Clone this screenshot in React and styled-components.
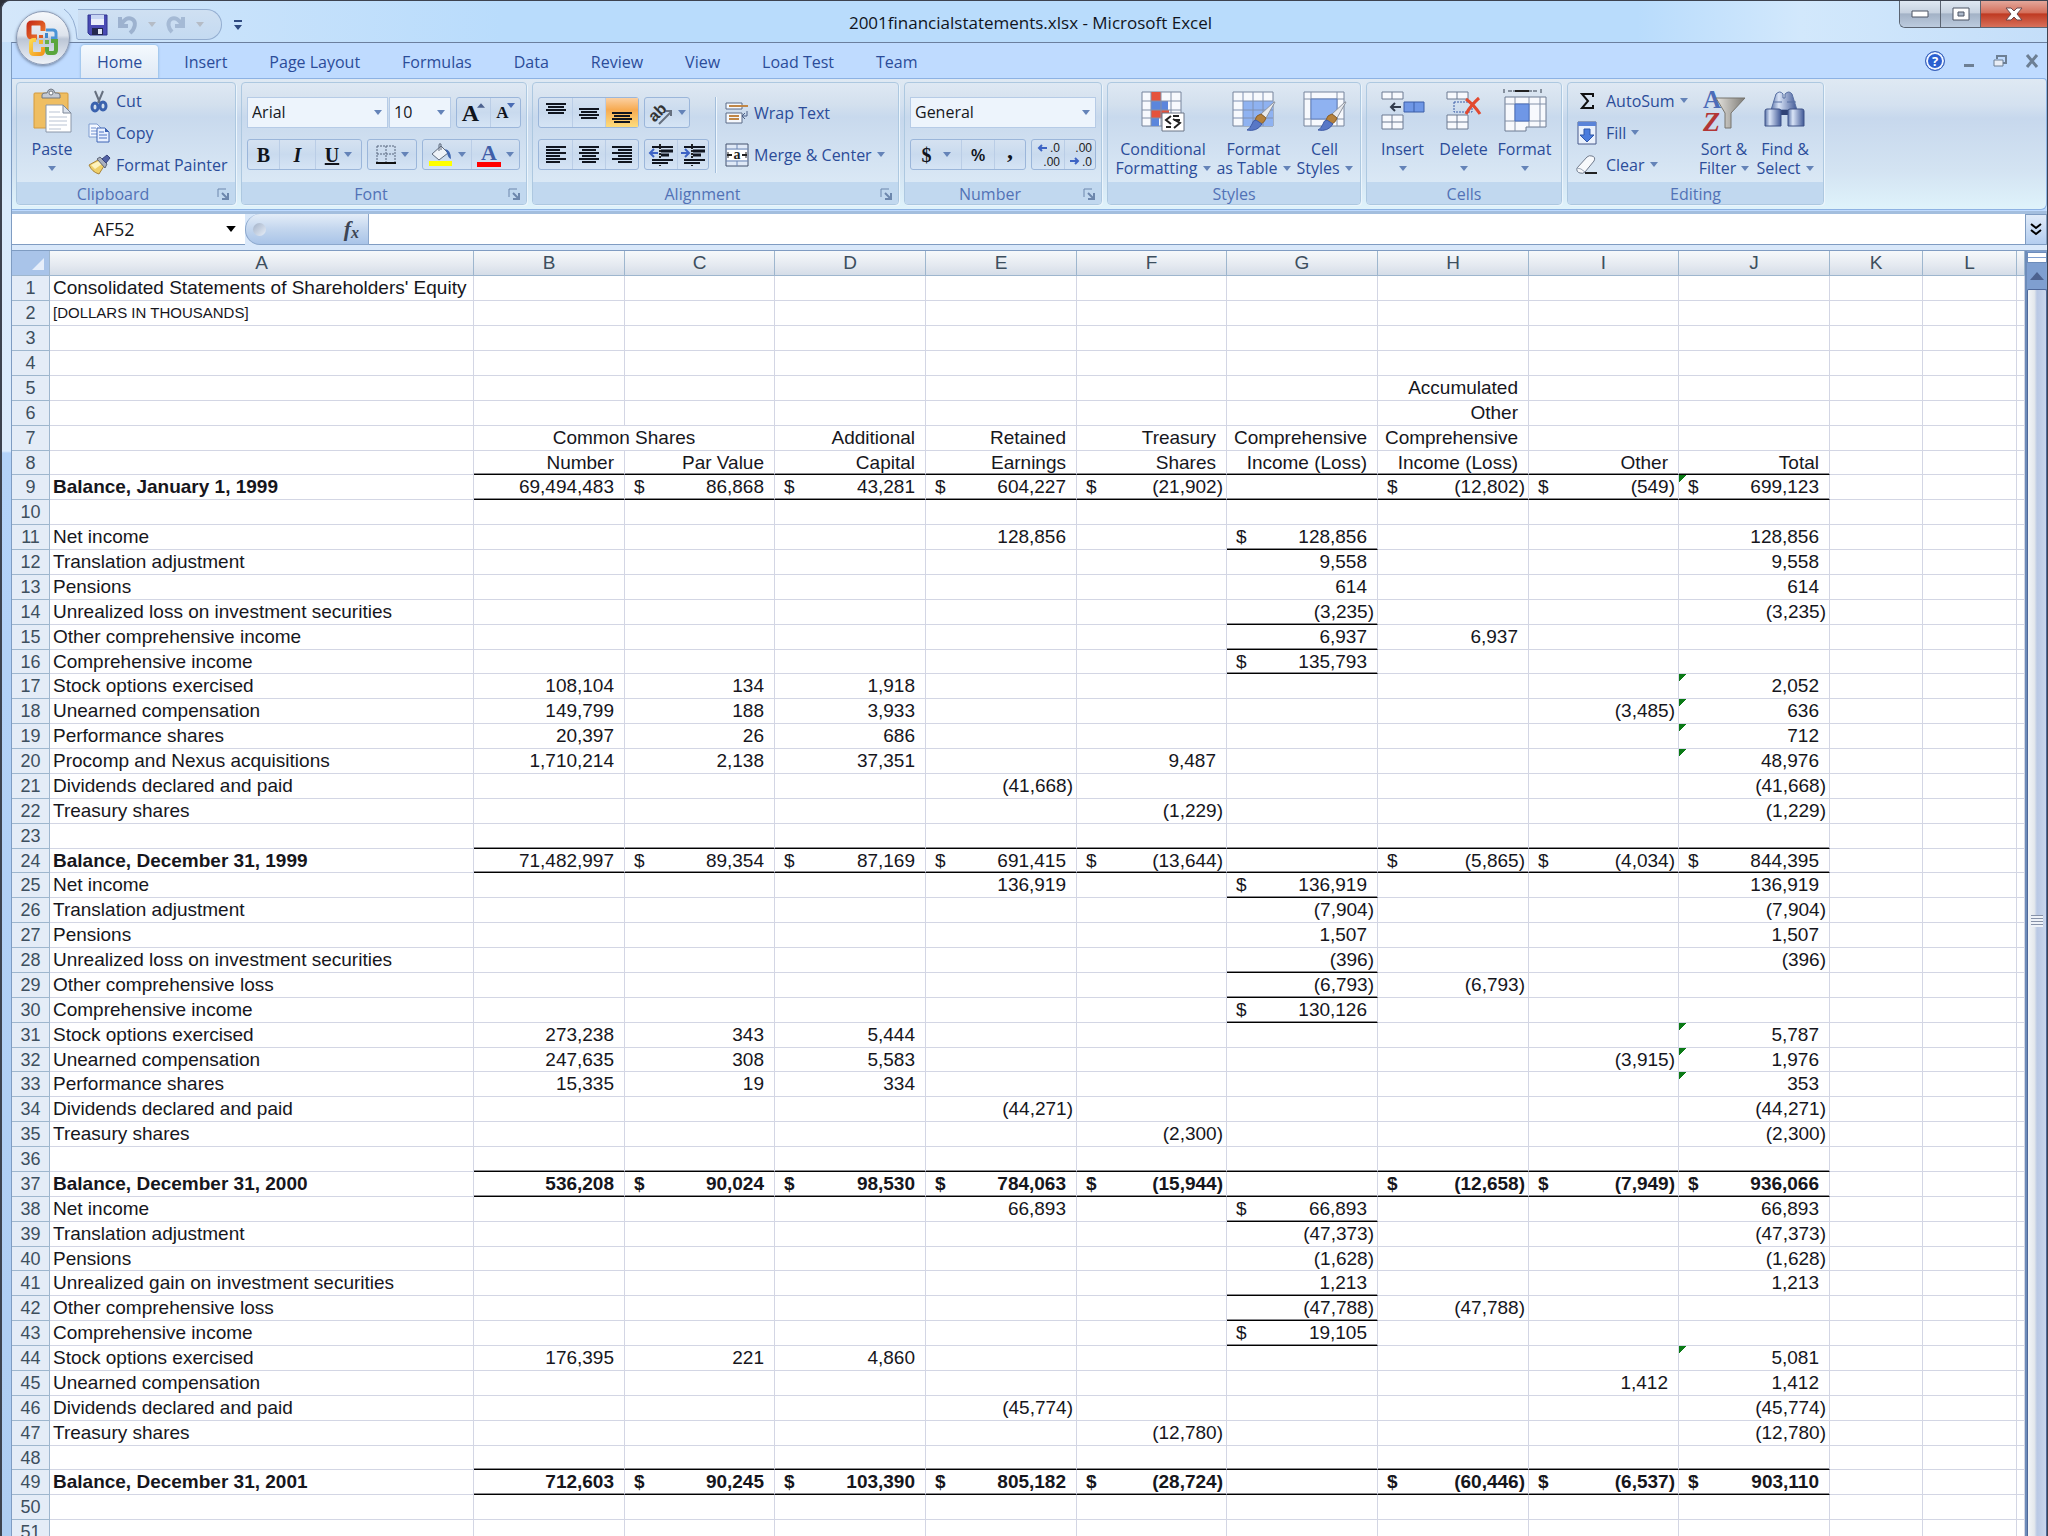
import React, { useState } from 'react';
import styled, { createGlobalStyle, css } from 'styled-components';

const COLUMNS = [
    { id: 'A', width: 424 },
    { id: 'B', width: 151 },
    { id: 'C', width: 150 },
    { id: 'D', width: 151 },
    { id: 'E', width: 151 },
    { id: 'F', width: 150 },
    { id: 'G', width: 151 },
    { id: 'H', width: 151 },
    { id: 'I', width: 150 },
    { id: 'J', width: 151 },
    { id: 'K', width: 93 },
    { id: 'L', width: 94 },
];

// a leading $ is drawn at the left of the cell, like Excel's accounting format
const SHEET = {
    1: { A: "Consolidated Statements of Shareholders' Equity" },
    2: { A: '[DOLLARS IN THOUSANDS]' },
    5: { H: 'Accumulated' },
    6: { H: 'Other' },
    7: { B: 'Common Shares', D: 'Additional', E: 'Retained', F: 'Treasury', G: 'Comprehensive', H: 'Comprehensive' },
    8: { B: 'Number', C: 'Par Value', D: 'Capital', E: 'Earnings', F: 'Shares', G: 'Income (Loss)', H: 'Income (Loss)', I: 'Other', J: 'Total' },
    9: { A: 'Balance, January 1, 1999', B: '69,494,483', C: '$86,868', D: '$43,281', E: '$604,227', F: '$(21,902)', H: '$(12,802)', I: '$(549)', J: '$699,123' },
    11: { A: 'Net income', E: '128,856', G: '$128,856', J: '128,856' },
    12: { A: 'Translation adjustment', G: '9,558', J: '9,558' },
    13: { A: 'Pensions', G: '614', J: '614' },
    14: { A: 'Unrealized loss on investment securities', G: '(3,235)', J: '(3,235)' },
    15: { A: 'Other comprehensive income', G: '6,937', H: '6,937' },
    16: { A: 'Comprehensive income', G: '$135,793' },
    17: { A: 'Stock options exercised', B: '108,104', C: '134', D: '1,918', J: '2,052' },
    18: { A: 'Unearned compensation', B: '149,799', C: '188', D: '3,933', I: '(3,485)', J: '636' },
    19: { A: 'Performance shares', B: '20,397', C: '26', D: '686', J: '712' },
    20: { A: 'Procomp and Nexus acquisitions', B: '1,710,214', C: '2,138', D: '37,351', F: '9,487', J: '48,976' },
    21: { A: 'Dividends declared and paid', E: '(41,668)', J: '(41,668)' },
    22: { A: 'Treasury shares', F: '(1,229)', J: '(1,229)' },
    24: { A: 'Balance, December 31, 1999', B: '71,482,997', C: '$89,354', D: '$87,169', E: '$691,415', F: '$(13,644)', H: '$(5,865)', I: '$(4,034)', J: '$844,395' },
    25: { A: 'Net income', E: '136,919', G: '$136,919', J: '136,919' },
    26: { A: 'Translation adjustment', G: '(7,904)', J: '(7,904)' },
    27: { A: 'Pensions', G: '1,507', J: '1,507' },
    28: { A: 'Unrealized loss on investment securities', G: '(396)', J: '(396)' },
    29: { A: 'Other comprehensive loss', G: '(6,793)', H: '(6,793)' },
    30: { A: 'Comprehensive income', G: '$130,126' },
    31: { A: 'Stock options exercised', B: '273,238', C: '343', D: '5,444', J: '5,787' },
    32: { A: 'Unearned compensation', B: '247,635', C: '308', D: '5,583', I: '(3,915)', J: '1,976' },
    33: { A: 'Performance shares', B: '15,335', C: '19', D: '334', J: '353' },
    34: { A: 'Dividends declared and paid', E: '(44,271)', J: '(44,271)' },
    35: { A: 'Treasury shares', F: '(2,300)', J: '(2,300)' },
    37: { A: 'Balance, December 31, 2000', B: '536,208', C: '$90,024', D: '$98,530', E: '$784,063', F: '$(15,944)', H: '$(12,658)', I: '$(7,949)', J: '$936,066' },
    38: { A: 'Net income', E: '66,893', G: '$66,893', J: '66,893' },
    39: { A: 'Translation adjustment', G: '(47,373)', J: '(47,373)' },
    40: { A: 'Pensions', G: '(1,628)', J: '(1,628)' },
    41: { A: 'Unrealized gain on investment securities', G: '1,213', J: '1,213' },
    42: { A: 'Other comprehensive loss', G: '(47,788)', H: '(47,788)' },
    43: { A: 'Comprehensive income', G: '$19,105' },
    44: { A: 'Stock options exercised', B: '176,395', C: '221', D: '4,860', J: '5,081' },
    45: { A: 'Unearned compensation', I: '1,412', J: '1,412' },
    46: { A: 'Dividends declared and paid', E: '(45,774)', J: '(45,774)' },
    47: { A: 'Treasury shares', F: '(12,780)', J: '(12,780)' },
    49: { A: 'Balance, December 31, 2001', B: '712,603', C: '$90,245', D: '$103,390', E: '$805,182', F: '$(28,724)', H: '$(60,446)', I: '$(6,537)', J: '$903,110' },
};

const ROW_COUNT = 51;
const BOLD_LABELS = [9, 24, 37, 49];
const BOLD_ROWS = [37, 49];
const RULED_ROWS = [8, 9, 23, 24, 36, 37, 48, 49];
const RULED_G = [11, 14, 15, 16, 25, 28, 29, 30, 38, 41, 42, 43];
const FLAGGED = [9, 17, 18, 19, 20, 31, 32, 33, 44];

const TABS = ['Home', 'Insert', 'Page Layout', 'Formulas', 'Data', 'Review', 'View', 'Load Test', 'Team'];

/* ---------- icons ---------- */

const Caret = ({ color = '#6483b8', size = 8 }) => (
    <svg width={size} height={size / 2 + 1} viewBox="0 0 8 5" aria-hidden="true">
        <path d="M0 0h8L4 5z" fill={color} />
    </svg>
);

const Caretup = () => (
    <svg width="14" height="8" viewBox="0 0 14 8" aria-hidden="true">
        <path d="M0 8l7-8 7 8z" fill="#4d628f" />
    </svg>
);

const OfficeLogo = () => (
    <svg width="34" height="36" viewBox="0 0 34 36" fill="none" aria-hidden="true">
        <defs>
            <linearGradient id="oRed" x1="0" y1="0" x2="1" y2="1">
                <stop offset="0" stopColor="#c8321a" />
                <stop offset="1" stopColor="#ef7a2c" />
            </linearGradient>
            <linearGradient id="oYellow" x1="0" y1="0" x2="1" y2="1">
                <stop offset="0" stopColor="#fbd84f" />
                <stop offset="1" stopColor="#f2961d" />
            </linearGradient>
        </defs>
        <path d="M11 17H6q-3 0-3-3V6q0-3 3-3h8q3 0 3 3v5" stroke="url(#oRed)" strokeWidth="5" />
        <path d="M20 10h7q3 0 3 3v5h-5" stroke="#4a94d6" strokeWidth="3" />
        <path d="M10 20H8q-3 0-3 3v8q0 3 3 3h6q3 0 3-3v-4" stroke="url(#oYellow)" strokeWidth="4" />
        <path d="M25 21h5v9q0 3-3 3h-4q-2 0-2-3v-3" stroke="#5aa63c" strokeWidth="4" />
        <path d="M13 15h4v3h-4z" fill="#dc5a22" />
        <path d="M19 13h3v5h-3z" fill="#3f86cc" />
        <path d="M13 20h4v4h-4z" fill="#f3b62c" />
        <path d="M19 20h4v4h-4z" fill="#6cb048" />
    </svg>
);

const SaveIcon = () => (
    <svg width="21" height="22" viewBox="0 0 21 22" aria-hidden="true">
        <path d="M1 1h19v20H3l-2-2z" fill="#4a4bb4" stroke="#2f3490" />
        <path d="M4 1h13v10H4z" fill="#e9eefb" />
        <path d="M4 1h13v4H4z" fill="#c9d6f4" />
        <path d="M5 14h11v7H5z" fill="#23284e" />
        <path d="M11 15h4v5h-4z" fill="#dfe5f5" />
    </svg>
);

const UndoIcon = () => (
    <svg width="20" height="20" viewBox="0 0 20 20" fill="none" aria-hidden="true">
        <path d="M2 2v9h8" stroke="#9db2cf" strokeWidth="4" />
        <path d="M3 10C6 4 10 2 14 4c5 3 3 10-2 14" stroke="#9db2cf" strokeWidth="4" />
    </svg>
);

const RedoIcon = () => (
    <svg width="20" height="20" viewBox="0 0 20 20" fill="none" aria-hidden="true">
        <path d="M17 2v9H9" stroke="#a5bad5" strokeWidth="4" />
        <path d="M16 10C13 4 9 2 5 4 1 7 2 13 6 17" stroke="#a5bad5" strokeWidth="4" />
    </svg>
);

const PasteIcon = () => (
    <svg width="40" height="44" viewBox="0 0 40 44" aria-hidden="true">
        <path d="M3 4h32q1 0 1 1v34H2V5q0-1 1-1z" fill="#efbe62" stroke="#d49a3c" />
        <path d="M10 9V6q0-2 3-2h2q1-4 4-4t4 4h2q3 0 3 2v3z" fill="#c5cad3" stroke="#6f7680" />
        <circle cx="19" cy="4" r="2" fill="#fff" stroke="#6f7680" />
        <path d="M14 16h17l8 8v19H14z" fill="#fff" stroke="#8a96a8" />
        <path d="M31 16v8h8z" fill="#dbe2ec" stroke="#7d8798" />
        <path d="M17 23h11M17 28h18M17 32h18M17 36h18M17 40h12" stroke="#b9c3d3" />
    </svg>
);

const CutIcon = () => (
    <svg width="18" height="22" viewBox="0 0 18 22" fill="none" aria-hidden="true">
        <path d="M5 1l5 12M13 1L8 13" stroke="#66707f" strokeWidth="2" />
        <ellipse cx="5" cy="17" rx="3" ry="4" stroke="#3a62ae" strokeWidth="3" />
        <ellipse cx="13" cy="16" rx="3" ry="4" stroke="#3a62ae" strokeWidth="3" />
    </svg>
);

const CopyIcon = () => (
    <svg width="22" height="20" viewBox="0 0 22 20" aria-hidden="true">
        <path d="M1 1h8l4 4v9H1z" fill="#f4f8ff" stroke="#7f9cd0" />
        <path d="M3 5h5M3 8h8M3 11h8" stroke="#6f8fd0" />
        <path d="M9 5h8l4 4v10H9z" fill="#e8f0ff" stroke="#3f64b4" />
        <path d="M11 9h5M11 12h8M11 15h8" stroke="#4d72c4" />
        <path d="M17 5v4h4z" fill="#3f64b4" />
    </svg>
);

const PainterIcon = () => (
    <svg width="23" height="21" viewBox="0 0 23 21" aria-hidden="true">
        <path d="M1 11l9-5 6 6-5 8Q4 18 1 11z" fill="#efd06a" stroke="#a8843a" />
        <path d="M3 11l8-4 3 3-7 5z" fill="#fdf3bf" />
        <path d="M9 5l3-2 7 7-2 4z" fill="#a9b0be" stroke="#5d6677" />
        <path d="M14 5l5-4 3 3-4 5z" fill="#5162a6" stroke="#38447c" />
    </svg>
);

const BordersIcon = () => (
    <svg width="20" height="20" viewBox="0 0 20 20" fill="none" aria-hidden="true">
        <path d="M1 1h18M1 9h18M1 1v16M10 1v16M19 1v16" stroke="#56647c" strokeDasharray="2 1" />
        <path d="M0 18h20" stroke="#111" strokeWidth="2" />
    </svg>
);

const FillColorIcon = () => (
    <svg width="24" height="24" viewBox="0 0 24 24" aria-hidden="true">
        <path d="M3 11l9-8 7 7-9 7z" fill="#eef2f8" stroke="#5e6a7c" />
        <path d="M10 8V2q0-2 2-1v6" fill="none" stroke="#5e6a7c" />
        <path d="M16 6q6 1 6 10-3-1-4-6z" fill="#3f66b0" />
        <path d="M0 18h23v5H0z" fill="#ffff00" />
    </svg>
);

const FontColorIcon = () => (
    <ColorLetter>
        A
        <ColorBar />
    </ColorLetter>
);

// one bar per text line, 3px apart from the given start
const LinesIcon = ({ lines, start, align = 'center' }) => (
    <svg width="20" height="22" viewBox="0 0 20 22" aria-hidden="true">
        {lines.map((w, i) => {
            const x = align === 'left' ? 0 : align === 'right' ? 20 - w : (20 - w) / 2;
            return <rect key={i} x={x} y={start + i * 3} width={w} height="2" fill="#10151f" />;
        })}
    </svg>
);

const IndentIcon = ({ flip }) => (
    <svg width="24" height="22" viewBox="0 0 24 22" fill="none" aria-hidden="true">
        <path d="M11 0v22" stroke="#222" strokeWidth="2" strokeDasharray="2 1" />
        <path d="M3 3h21M3 16h21M3 19h16" stroke="#10151f" strokeWidth="2" />
        <path d="M12 7h12M12 11h8" stroke="#10151f" strokeWidth="3" />
        {flip
            ? <path d="M0 9h7M4 5l4 4-4 4" stroke="#3d63c4" strokeWidth="2" />
            : <path d="M9 9H2M5 5L1 9l4 4" stroke="#3d63c4" strokeWidth="2" />}
    </svg>
);

const OrientationIcon = () => (
    <svg width="24" height="24" viewBox="0 0 24 24" aria-hidden="true">
        <text x="1" y="17" fontFamily="Liberation Sans, sans-serif" fontSize="16" fontWeight="700" fill="#333" transform="rotate(-45 9 14)">ab</text>
        <path d="M10 23L22 11M17 10h5v5" fill="none" stroke="#66707f" strokeWidth="2" />
    </svg>
);

const WrapIcon = () => (
    <svg width="24" height="24" viewBox="0 0 24 24" aria-hidden="true">
        <path d="M1 2h16v6H1zM1 12h16v10H1z" fill="#f5f8fd" stroke="#5a6a86" />
        <path d="M4 5h19M4 15h10M4 18h10" stroke="#c08646" strokeWidth="2" />
        <path d="M22 10v5h-4M20 12l-3 3 3 3" fill="none" stroke="#4b5f86" />
    </svg>
);

const MergeIcon = () => (
    <svg width="24" height="24" viewBox="0 0 24 24" aria-hidden="true">
        <path d="M1 1h22v22H1z" fill="#dfe9f7" stroke="#44536e" />
        <path d="M1 6h22M1 18h22M12 1v5M12 18v5" stroke="#6d86b4" />
        <path d="M2 7h20v10H2z" fill="#fff" />
        <path d="M2 12h5M17 12h5" stroke="#222" strokeWidth="2" />
        <path d="M3 9v6M21 9v6" stroke="#222" />
        <text x="12" y="16" textAnchor="middle" fontFamily="Liberation Serif, serif" fontSize="14" fontWeight="700" fill="#222">a</text>
    </svg>
);

const DecimalIcon = ({ increase }) => (
    <svg width="24" height="24" viewBox="0 0 24 24" aria-hidden="true">
        <text x="24" y="9" textAnchor="end" fontFamily="Liberation Sans, sans-serif" fontSize="12" fill="#222">{increase ? '.0' : '.00'}</text>
        <text x="24" y="23" textAnchor="end" fontFamily="Liberation Sans, sans-serif" fontSize="12" fill="#222">{increase ? '.00' : '.0'}</text>
        {increase
            ? <path d="M11 5H3M6 2L3 5l3 3" fill="none" stroke="#3d63c4" strokeWidth="2" />
            : <path d="M2 18h8M7 15l3 3-3 3" fill="none" stroke="#3d63c4" strokeWidth="2" />}
    </svg>
);

const ConditionalIcon = () => (
    <svg width="44" height="44" viewBox="0 0 44 44" aria-hidden="true">
        <path d="M1 3h39v34H1z" fill="#f7f9fd" stroke="#76849c" />
        <path d="M10 3h10v9H10zM10 21h18v8H10z" fill="#e5533c" />
        <path d="M10 12h17v9H10zM10 29h8v8h-8z" fill="#5b86dc" />
        <path d="M1 12h39M1 21h39M1 29h39M10 3v34M20 3v34M30 3v34" stroke="#8290a8" fill="none" />
        <path d="M21 24h22v18H21z" fill="#fff" stroke="#6a7486" />
        <path d="M30 27l-5 4 5 4M25 38h5M32 27h6M33 31h6M32 30l7 4-6 5" stroke="#222" strokeWidth="2" fill="none" />
    </svg>
);

const Brush = () => (
    <g>
        <path d="M43 13l-9 16-5-4 13-12z" fill="#e8e9ec" stroke="#8b929e" />
        <path d="M34 29l-5-4q-5 1-6 6l6 4q4-2 5-6z" fill="#b5813d" stroke="#8a5f28" />
        <path d="M24 31q-3 0-4 4-2 5-5 6 10 2 15-6z" fill="#5877c6" stroke="#3f5ba6" />
    </g>
);

const TableStyleIcon = () => (
    <svg width="44" height="44" viewBox="0 0 44 44" aria-hidden="true">
        <path d="M1 3h40v34H1z" fill="#f7f9fd" stroke="#76849c" />
        <path d="M11 12h30v25H11z" fill="#8fb2f1" />
        <path d="M1 12h40M1 21h40M1 29h40M11 3v34M21 3v34M31 3v34" stroke="#7f90b2" fill="none" />
        <Brush />
    </svg>
);

const CellStyleIcon = () => (
    <svg width="44" height="44" viewBox="0 0 44 44" aria-hidden="true">
        <path d="M1 3h40v34H1z" fill="#f7f9fd" stroke="#76849c" />
        <path d="M1 10h40M1 30h40M8 3v34M34 3v34" stroke="#8290a8" />
        <path d="M8 10h26v20H8z" fill="#8fb2f1" stroke="#6280bd" />
        <Brush />
    </svg>
);

const InsertIcon = () => (
    <svg width="44" height="44" viewBox="0 0 44 44" aria-hidden="true">
        <path d="M1 3h21v7H1zM1 26h21v14H1zM11 3v7M11 26v14M1 33h21" fill="#f7f9fd" stroke="#6c7a92" />
        <path d="M23 13h20v10H23zM33 13v10" fill="#6f97e6" stroke="#3d5fa8" />
        <path d="M20 18h-9M14 14l-4 4 4 4" fill="none" stroke="#333c4c" strokeWidth="2" />
    </svg>
);

const DeleteIcon = () => (
    <svg width="44" height="44" viewBox="0 0 44 44" aria-hidden="true">
        <path d="M5 3h21v7H5zM5 26h21v14H5zM15 3v7M15 26v14M5 33h21" fill="#f7f9fd" stroke="#6c7a92" />
        <path d="M12 13h18v10H12z" fill="none" stroke="#3d5fa8" strokeDasharray="2 1" />
        <path d="M24 10q8 6 14 15M37 9Q29 16 24 25" fill="none" stroke="#e2492f" strokeWidth="3" />
    </svg>
);

const FormatIcon = () => (
    <svg width="44" height="44" viewBox="0 0 44 44" aria-hidden="true">
        <path d="M1 0v5M38 0v5M5 2h30" stroke="#333c4c" strokeDasharray="4 1" />
        <path d="M12 2h14" stroke="#222" strokeWidth="2" />
        <path d="M2 8h41v30H23v4H2z" fill="#f7f9fd" stroke="#6c7a92" />
        <path d="M2 15h41M2 32h41M12 8v34M26 8v30M37 8v30" stroke="#8290a8" />
        <path d="M12 15h14v17H12z" fill="#6f97e6" stroke="#4d71bd" />
    </svg>
);

const SigmaIcon = () => (
    <svg width="16" height="18" viewBox="0 0 16 18" fill="none" aria-hidden="true">
        <path d="M14 5V2H3l6 7-6 7h11v-3" stroke="#111" strokeWidth="2" />
    </svg>
);

const FillIcon = () => (
    <svg width="20" height="24" viewBox="0 0 20 24" aria-hidden="true">
        <path d="M1 1h18v22H1z" fill="#eaf1fc" stroke="#46598a" />
        <path d="M1 1h18v4H1z" fill="#5b84d8" />
        <path d="M7 8h6v6h4l-7 7-7-7h4z" fill="#4b7cdd" stroke="#2f56a8" />
    </svg>
);

const ClearIcon = () => (
    <svg width="22" height="20" viewBox="0 0 22 20" aria-hidden="true">
        <path d="M1 13L11 2q2-2 5-1 4 1 2 5l-9 11q-2 2-5 1-4-1-3-5z" fill="#f7f9fc" stroke="#707a8c" />
        <path d="M1 13q4 0 8 4" fill="none" stroke="#9aa5b6" />
        <path d="M9 18h12" stroke="#222" strokeWidth="2" />
    </svg>
);

const SortIcon = () => (
    <svg width="44" height="44" viewBox="0 0 44 44" aria-hidden="true">
        <defs>
            <linearGradient id="funnel" x1="0" x2="1">
                <stop offset="0" stopColor="#e6e4df" />
                <stop offset="1" stopColor="#7d7b76" />
            </linearGradient>
        </defs>
        <text x="1" y="19" fontFamily="Liberation Serif, serif" fontSize="25" fontWeight="700" fill="#4c6cb8">A</text>
        <text x="1" y="42" fontFamily="Liberation Serif, serif" fontSize="28" fontWeight="700" fontStyle="italic" fill="#b23636">Z</text>
        <path d="M14 9h29L29 24v15h-6V24z" fill="url(#funnel)" stroke="#77756f" />
    </svg>
);

const FindIcon = () => (
    <svg width="42" height="44" viewBox="0 0 42 44" aria-hidden="true">
        <defs>
            <linearGradient id="barrel" x1="0" x2="1">
                <stop offset="0" stopColor="#5a73a8" />
                <stop offset="0.3" stopColor="#d9e4f7" />
                <stop offset="1" stopColor="#405896" />
            </linearGradient>
        </defs>
        <path d="M12 5q4-4 7 0v4h2V5q4-4 7 0l5 16H7z" fill="url(#barrel)" stroke="#5870a3" />
        <path d="M17 21h7v5h-7z" fill="#2f4275" />
        <path d="M1 22q0-2 2-2h12q2 0 2 2v15H1z" fill="url(#barrel)" stroke="#3e5387" />
        <path d="M24 22q0-2 2-2h12q2 0 2 2v15H24z" fill="url(#barrel)" stroke="#3e5387" />
        <path d="M9 13h9M23 13h9" stroke="#5870a3" />
    </svg>
);

const LauncherIcon = () => (
    <svg width="12" height="12" viewBox="0 0 12 12" fill="none" aria-hidden="true">
        <path d="M1 9V1h8" stroke="#6d87ad" />
        <path d="M5 5l5 5M11 5v6H5" stroke="#6d87ad" strokeWidth="2" />
    </svg>
);

/* ---------- sheet ---------- */

function SheetCell({ row, col }) {
    const raw = (SHEET[row] && SHEET[row][col]) || '';
    const accounting = raw.startsWith('$');
    const text = accounting ? raw.slice(1) : raw;
    const ruled = (RULED_ROWS.includes(row) && col >= 'B' && col <= 'J') || (col === 'G' && RULED_G.includes(row));

    return (
        <Cell
            colSpan={row === 7 && col === 'B' ? 2 : 1}
            $label={col === 'A'}
            $small={row === 2}
            $center={row === 7 && col === 'B'}
            $negative={text.startsWith('(')}
            $bold={BOLD_ROWS.includes(row) || (col === 'A' && BOLD_LABELS.includes(row))}
            $ruled={ruled}
            $flagged={col === 'J' && FLAGGED.includes(row)}
        >
            {accounting ? (
                <Accounting>
                    <span>$</span>
                    <span>{text}</span>
                </Accounting>
            ) : text}
        </Cell>
    );
}

function Sheet() {
    const rows = Array.from({ length: ROW_COUNT }, (_, i) => i + 1);

    return (
        <SheetArea>
            <GridPane>
                <Table>
                    <colgroup>
                        <Col $width={38} />
                        {COLUMNS.map((c) => <Col key={c.id} $width={c.width} />)}
                        <col />
                    </colgroup>
                    <thead>
                        <tr>
                            <Corner aria-label="Select all">
                                <svg width="12" height="12" viewBox="0 0 12 12" aria-hidden="true">
                                    <path d="M12 0v12H0z" fill="#e6eefa" />
                                </svg>
                            </Corner>
                            {COLUMNS.map((c) => <ColumnHead key={c.id} scope="col">{c.id}</ColumnHead>)}
                            <ColumnHead aria-label="M" />
                        </tr>
                    </thead>
                    <tbody>
                        {rows.map((row) => (
                            <Row key={row}>
                                <RowHead scope="row">{row}</RowHead>
                                {COLUMNS.filter((c) => !(row === 7 && c.id === 'C')).map((c) => (
                                    <SheetCell key={c.id} row={row} col={c.id} />
                                ))}
                                <Cell />
                            </Row>
                        ))}
                    </tbody>
                </Table>
            </GridPane>
            <ScrollBar>
                <SplitBox />
                <ScrollUp aria-label="Scroll up"><Caretup /></ScrollUp>
                <Thumb><Grip /></Thumb>
            </ScrollBar>
        </SheetArea>
    );
}

/* ---------- ribbon ---------- */

function Group({ title, width, launcher, children }) {
    return (
        <GroupBox $width={width}>
            {children}
            <GroupTitle $launcher={launcher}>
                <span>{title}</span>
                {launcher && <Launcher aria-label={`${title} settings`}><LauncherIcon /></Launcher>}
            </GroupTitle>
        </GroupBox>
    );
}

function BigItem({ icon, width, first, second }) {
    return (
        <BigButton $width={width}>
            {icon}
            <BigText>{first}</BigText>
            <BigText>{second}<Caret /></BigText>
        </BigButton>
    );
}

function Combo({ label, value, width }) {
    return (
        <ComboBox $width={width}>
            <ComboSelect aria-label={label} defaultValue={value}>
                <option>{value}</option>
            </ComboSelect>
            <ComboArrow><Caret /></ComboArrow>
        </ComboBox>
    );
}

function Ribbon() {
    return (
        <RibbonPanel>
            <Group title="Clipboard" width={220} launcher>
                <Tools>
                    <BigItem icon={<PasteIcon />} width={60} first="Paste" />
                    <Stack>
                        <SmallButton><IconSlot><CutIcon /></IconSlot>Cut</SmallButton>
                        <SmallButton><IconSlot><CopyIcon /></IconSlot>Copy</SmallButton>
                        <SmallButton><IconSlot><PainterIcon /></IconSlot>Format Painter</SmallButton>
                    </Stack>
                </Tools>
            </Group>

            <Group title="Font" width={286} launcher>
                <Rows>
                    <ToolRow>
                        <Joined>
                            <Combo label="Font" value="Arial" width={141} />
                            <Combo label="Font size" value="10" width={62} />
                        </Joined>
                        <Segment>
                            <SegButton $width={33} aria-label="Grow font"><Glyph $size={24}>A</Glyph><Raised><Caretup /></Raised></SegButton>
                            <SegButton $width={30} aria-label="Shrink font"><Glyph $size={17}>A</Glyph><Raised><Caret color="#4a6cb4" /></Raised></SegButton>
                        </Segment>
                    </ToolRow>
                    <ToolRow>
                        <Segment>
                            <SegButton $width={31}><Glyph $size={20}>B</Glyph></SegButton>
                            <SegButton $width={36}><Glyph $size={20} $italic>I</Glyph></SegButton>
                            <SegButton $width={46}><Glyph $size={20} $underline>U</Glyph><Caret /></SegButton>
                        </Segment>
                        <Segment>
                            <SegButton $width={48} aria-label="Borders"><BordersIcon /><Caret /></SegButton>
                        </Segment>
                        <Segment>
                            <SegButton $width={48} aria-label="Fill color"><FillColorIcon /><Caret /></SegButton>
                            <SegButton $width={48} aria-label="Font color"><FontColorIcon /><Caret /></SegButton>
                        </Segment>
                    </ToolRow>
                </Rows>
            </Group>

            <Group title="Alignment" width={367} launcher>
                <Tools $padded>
                    <Stack $gap={11}>
                        <ToolRow>
                            <Segment>
                                <SegButton $width={33} aria-label="Top align"><LinesIcon lines={[20, 16, 20, 16]} start={1} /></SegButton>
                                <SegButton $width={33} aria-label="Middle align"><LinesIcon lines={[20, 16, 20, 16]} start={6} /></SegButton>
                                <SegButton $width={33} $active aria-label="Bottom align"><LinesIcon lines={[20, 16, 20, 16]} start={10} /></SegButton>
                            </Segment>
                            <Segment>
                                <SegButton $width={44} aria-label="Orientation"><OrientationIcon /><Caret /></SegButton>
                            </Segment>
                        </ToolRow>
                        <ToolRow>
                            <Segment>
                                <SegButton $width={33} aria-label="Align left"><LinesIcon lines={[20, 14, 20, 14, 20, 14]} start={2} align="left" /></SegButton>
                                <SegButton $width={33} aria-label="Center"><LinesIcon lines={[20, 14, 20, 14, 20, 14]} start={2} /></SegButton>
                                <SegButton $width={33} aria-label="Align right"><LinesIcon lines={[20, 14, 20, 14, 20, 14]} start={2} align="right" /></SegButton>
                            </Segment>
                            <Segment>
                                <SegButton $width={32} aria-label="Decrease indent"><IndentIcon /></SegButton>
                                <SegButton $width={31} aria-label="Increase indent"><IndentIcon flip /></SegButton>
                            </Segment>
                        </ToolRow>
                    </Stack>
                    <Divider />
                    <Stack $gap={11}>
                        <SmallButton $tight><WrapIcon />Wrap Text</SmallButton>
                        <SmallButton $tight><MergeIcon />Merge &amp; Center <Caret /></SmallButton>
                    </Stack>
                </Tools>
            </Group>

            <Group title="Number" width={198} launcher>
                <Rows>
                    <Combo label="Number format" value="General" width={186} />
                    <ToolRow>
                        <Segment>
                            <SegButton $width={50}><Glyph $size={20}>$</Glyph><Spaced><Caret /></Spaced></SegButton>
                            <SegButton $width={33}><Glyph $size={17} $sans>%</Glyph></SegButton>
                            <SegButton $width={31}><Glyph $size={24} $lifted>,</Glyph></SegButton>
                        </Segment>
                        <Segment>
                            <SegButton $width={32} aria-label="Increase decimal"><DecimalIcon increase /></SegButton>
                            <SegButton $width={31} aria-label="Decrease decimal"><DecimalIcon /></SegButton>
                        </Segment>
                    </ToolRow>
                </Rows>
            </Group>

            <Group title="Styles" width={254}>
                <Tools>
                    <BigItem icon={<ConditionalIcon />} width={100} first="Conditional" second="Formatting" />
                    <BigItem icon={<TableStyleIcon />} width={81} first="Format" second="as Table" />
                    <BigItem icon={<CellStyleIcon />} width={61} first="Cell" second="Styles" />
                </Tools>
            </Group>

            <Group title="Cells" width={196}>
                <Tools>
                    <BigItem icon={<InsertIcon />} width={61} first="Insert" />
                    <BigItem icon={<DeleteIcon />} width={61} first="Delete" />
                    <BigItem icon={<FormatIcon />} width={61} first="Format" />
                </Tools>
            </Group>

            <Group title="Editing" width={257}>
                <Tools>
                    <Stack $width={122}>
                        <SmallButton $tight><IconSlot $wide><SigmaIcon /></IconSlot>AutoSum <Caret /></SmallButton>
                        <SmallButton $tight><IconSlot $wide><FillIcon /></IconSlot>Fill <Caret /></SmallButton>
                        <SmallButton $tight><IconSlot $wide><ClearIcon /></IconSlot>Clear <Caret /></SmallButton>
                    </Stack>
                    <BigItem icon={<SortIcon />} width={58} first="Sort &" second="Filter" />
                    <BigItem icon={<FindIcon />} width={64} first="Find &" second="Select" />
                </Tools>
            </Group>
        </RibbonPanel>
    );
}

/* ---------- app ---------- */

function App() {
    const [tab, setTab] = useState('Home');

    return (
        <Window>
            <GlobalStyle />
            <TitleBar>
                <QuickAccess>
                    <svg width="14" height="31" viewBox="0 0 14 31" fill="none" aria-hidden="true">
                        <path d="M0 0q12 8 13 30h1" stroke="#93add0" />
                    </svg>
                    <QuickPill>
                        <PlainButton aria-label="Save"><SaveIcon /></PlainButton>
                        <PlainButton aria-label="Undo"><UndoIcon /></PlainButton>
                        <Caret color="#b5bcc6" />
                        <PlainButton aria-label="Redo"><RedoIcon /></PlainButton>
                        <Caret color="#b5bcc6" />
                    </QuickPill>
                    <PlainButton aria-label="Customize">
                        <svg width="8" height="10" viewBox="0 0 8 10" aria-hidden="true">
                            <path d="M0 0h8v2H0zM0 5h8L4 10z" fill="#2f4a80" />
                        </svg>
                    </PlainButton>
                </QuickAccess>
                <Title>2001financialstatements.xlsx - Microsoft Excel</Title>
                <WindowButtons>
                    <WindowButton $width={40} aria-label="Minimize">
                        <svg width="18" height="8" viewBox="0 0 18 8"><path d="M1 1h16v6H1z" fill="#fff" stroke="#4d5564" /></svg>
                    </WindowButton>
                    <WindowButton $width={40} aria-label="Restore">
                        <svg width="18" height="14" viewBox="0 0 18 14">
                            <path d="M1 1h16v12H1z" fill="#fff" stroke="#4d5564" />
                            <path d="M6 5h6v4H6z" fill="#aebacb" stroke="#4d5564" />
                        </svg>
                    </WindowButton>
                    <WindowButton $width={67} $close aria-label="Close">
                        <svg width="18" height="14" viewBox="0 0 18 14">
                            <path d="M1 1h5l3 3 3-3h5l-5 6 5 6h-5l-3-3-3 3H1l5-6z" fill="#fff" stroke="#6b4a4e" />
                        </svg>
                    </WindowButton>
                </WindowButtons>
            </TitleBar>
            <OfficeButton aria-label="Office menu"><OfficeLogo /></OfficeButton>

            <Frame>
                <TabBar>
                    <TabList role="tablist">
                        {TABS.map((name) => (
                            <Tab key={name} role="tab" aria-selected={tab === name} $active={tab === name} onClick={() => setTab(name)}>
                                {name}
                            </Tab>
                        ))}
                    </TabList>
                    <DocButtons>
                        <PlainButton aria-label="Help">
                            <HelpBadge>?</HelpBadge>
                        </PlainButton>
                        <PlainButton aria-label="Minimize workbook">
                            <svg width="12" height="14" viewBox="0 0 12 14"><path d="M1 10h10v3H1z" fill="#6d7f94" /></svg>
                        </PlainButton>
                        <PlainButton aria-label="Restore workbook">
                            <svg width="14" height="12" viewBox="0 0 14 12" fill="none" stroke="#6d7f94">
                                <path d="M4 4V1h9v7h-3" strokeWidth="2" />
                                <path d="M1 5h9v6H1z" fill="#e9eef6" />
                            </svg>
                        </PlainButton>
                        <PlainButton aria-label="Close workbook">
                            <svg width="14" height="14" viewBox="0 0 14 14"><path d="M2 1l10 12M12 1L2 13" stroke="#6d7f94" strokeWidth="3" /></svg>
                        </PlainButton>
                    </DocButtons>
                </TabBar>

                <Ribbon />

                <FormulaBar>
                    <NameBox aria-label="Name box" defaultValue="AF52" />
                    <NameArrow aria-label="Show names"><Caret color="#000" size={10} /></NameArrow>
                    <FxButton aria-label="Insert function">
                        <Knob />
                        <FxText>f<sub>x</sub></FxText>
                    </FxButton>
                    <FormulaInput aria-label="Formula" />
                    <ExpandButton aria-label="Expand formula bar">
                        <svg width="12" height="13" viewBox="0 0 12 13" fill="none" stroke="#000" strokeWidth="2">
                            <path d="M1 1l5 4 5-4M1 7l5 4 5-4" />
                        </svg>
                    </ExpandButton>
                </FormulaBar>

                <Sheet />
            </Frame>
        </Window>
    );
}

export default App;

const GlobalStyle = createGlobalStyle`
    * {
        box-sizing: border-box;
    }

    body {
        margin: 0;
        overflow: hidden;
        background: #2d3038;
        font-family: "Open Sans", "Noto Sans", sans-serif;
        font-size: 16px;
    }

    button, input, select {
        margin: 0;
        padding: 0;
        border: none;
        background: none;
        font: inherit;
        color: inherit;
    }

    svg {
        display: block;
        flex: none;
        overflow: visible;
    }
`;

const Window = styled.div`
    position: relative;
    display: flex;
    flex-direction: column;
    height: 100vh;
    padding-left: 9px;
    border: solid #3d4350;
    border-width: 1px 1px 0 2px;
    border-radius: 10px 0 0 0;
    background: linear-gradient(#bfdcf8 0, #d9eafb 200px, #dcebfc 450px, #b3d2f8 452px, #aecdf2 100%);
    overflow: hidden;
`;

const TitleBar = styled.header`
    display: grid;
    grid-template-columns: 1fr auto 1fr;
    height: 41px;
    margin-left: -9px;
    padding-left: 12px;
    background: linear-gradient(90deg, #d4e7fa 0, #b9dcfc 500px, #b9dcfc 80%, #d2e8fc 88%, #c4def9 100%);
`;

const QuickAccess = styled.div`
    display: flex;
    align-items: center;
    align-self: start;
    height: 31px;
    margin: 8px 0 0 50px;
`;

const QuickPill = styled.div`
    display: flex;
    align-items: center;
    gap: 10px;
    height: 31px;
    padding: 0 17px 0 9px;
    margin-right: 12px;
    border: 1px solid #93add0;
    border-left: none;
    border-radius: 0 16px 16px 0;
    background: linear-gradient(#cfe0f2, #c4daf1);
`;

const PlainButton = styled.button`
    display: flex;
    align-items: center;
    justify-content: center;
`;

const Title = styled.h1`
    margin: 0;
    font-size: 17px;
    font-weight: 400;
    line-height: 43px;
    color: #10141c;
`;

const WindowButtons = styled.div`
    display: flex;
    justify-self: end;
    align-self: start;
    height: 27px;
    border: 1px solid #5b6472;
    border-top: none;
    border-right: none;
    border-radius: 0 0 0 6px;
    overflow: hidden;
`;

const WindowButton = styled.button`
    display: flex;
    align-items: center;
    justify-content: center;
    width: ${(props) => props.$width}px;
    background: ${(props) => (props.$close
        ? 'linear-gradient(#e3a79b 0, #d4705c 45%, #bf3a22 50%, #d8705a 100%)'
        : 'linear-gradient(#dfe8f2 0, #c6d1df 45%, #a3b2c6 50%, #bccbde 100%)')};

    & + & {
        border-left: 1px solid #5b6472;
    }
`;

const OfficeButton = styled.button`
    position: absolute;
    top: 10px;
    left: 14px;
    display: flex;
    align-items: center;
    justify-content: center;
    width: 54px;
    height: 54px;
    border: 1px solid #8a99b3;
    border-radius: 50%;
    background: linear-gradient(#f6f8fb 0, #dde3ec 45%, #bcc6d6 52%, #eef2f8 100%);
    box-shadow: 0 1px 3px #6d7f9c;
`;

const Frame = styled.main`
    display: flex;
    flex-direction: column;
    flex: 1;
    min-height: 0;
    border-top: 1px solid #6b7f9e;
    border-left: 1px solid #7f9cc2;
    background: #bfdbff;
`;

const TabBar = styled.nav`
    display: flex;
    justify-content: space-between;
    height: 35px;
    padding-left: 69px;
`;

const TabList = styled.div`
    display: flex;
    align-items: flex-end;
    gap: 10px;
`;

const Tab = styled.button`
    height: 33px;
    padding: 2px 16px 0;
    color: #2b4c99;
    white-space: nowrap;
    line-height: 31px;

    ${(props) => props.$active && css`
        border-radius: 4px 4px 0 0;
        background: linear-gradient(#f4f9fe, #dfe9f5);
        box-shadow: 0 0 2px 1px #9cc3e8;
    `}
`;

const DocButtons = styled.div`
    display: flex;
    align-items: center;
    gap: 18px;
    padding-right: 8px;
`;

const HelpBadge = styled.span`
    width: 20px;
    height: 20px;
    border: 1px solid #3b62b8;
    border-radius: 50%;
    background: #2b5fd0;
    box-shadow: inset 0 0 0 2px #eef4ff;
    color: #fff;
    font-size: 13px;
    font-weight: 700;
    line-height: 18px;
`;

const RibbonPanel = styled.section`
    display: flex;
    gap: 5px;
    height: 132px;
    padding: 3px 4px 4px;
    border: 1px solid #8db2e3;
    border-left: none;
    border-radius: 0 4px 6px 0;
    background: linear-gradient(#dfe9f3 0, #d4e1f0 20%, #c7d8ed 30%, #d3e3f2 70%, #dff3fb 100%);
`;

const GroupBox = styled.div`
    display: flex;
    flex-direction: column;
    flex: none;
    width: ${(props) => props.$width}px;
    border: 1px solid #adc8e0;
    border-radius: 4px;
    background: linear-gradient(#dee8f3 0, #d3e0ee 18%, #c8d9ed 28%, #dae8f5 82%);
    box-shadow: 1px 1px 0 #ecf5fc;
    overflow: hidden;
`;

const GroupTitle = styled.div`
    position: relative;
    height: 22px;
    padding-right: ${(props) => (props.$launcher ? 26 : 0)}px;
    background: #c1d8ef;
    color: #5272b6;
    line-height: 24px;
    text-align: center;
`;

const Launcher = styled.button`
    position: absolute;
    top: 6px;
    right: 6px;
`;

const Tools = styled.div`
    display: flex;
    flex: 1;
    padding: ${(props) => (props.$padded ? '14px 5px 0' : '0 5px')};
`;

const Rows = styled.div`
    display: flex;
    flex-direction: column;
    flex: 1;
    gap: 11px;
    padding: 14px 5px 0;
`;

const Stack = styled.div`
    display: flex;
    flex-direction: column;
    gap: ${(props) => props.$gap || 1}px;
    width: ${(props) => (props.$width ? `${props.$width}px` : 'auto')};
    padding-top: ${(props) => (props.$gap ? 0 : 2)}px;
`;

const ToolRow = styled.div`
    display: flex;
    justify-content: flex-start;
    gap: 5px;
    height: 31px;
`;

const Divider = styled.div`
    width: 2px;
    height: 76px;
    margin: 0 8px 0 6px;
    border-left: 1px solid #a3bedb;
    background: #eef6fd;
`;

const SmallButton = styled.button`
    display: flex;
    align-items: center;
    gap: 6px;
    height: 31px;
    padding-left: ${(props) => (props.$tight ? 0 : 6)}px;
    color: #2b4c99;
    white-space: nowrap;

    ${(props) => props.$tight && css`
        gap: 5px;
    `}
`;

const IconSlot = styled.span`
    display: flex;
    justify-content: center;
    width: ${(props) => (props.$wide ? 28 : 22)}px;
`;

const BigButton = styled.button`
    display: flex;
    flex-direction: column;
    align-items: center;
    width: ${(props) => props.$width}px;
    padding-top: 6px;
    color: #2b4c99;

    svg:first-child {
        margin-bottom: 7px;
    }
`;

const BigText = styled.span`
    display: flex;
    align-items: center;
    gap: 5px;
    height: 19px;
    line-height: 19px;
    white-space: nowrap;

    svg:first-child {
        margin: 0;
    }
`;

const Joined = styled.div`
    display: flex;
    gap: 1px;
`;

const ComboBox = styled.div`
    position: relative;
    width: ${(props) => props.$width}px;
    height: 31px;
`;

const ComboSelect = styled.select`
    appearance: none;
    width: 100%;
    height: 100%;
    padding: 0 20px 0 4px;
    border: 1px solid #b6cbe6;
    background: #edf4fc;
    color: #16181d;
    line-height: 29px;
`;

const ComboArrow = styled.span`
    position: absolute;
    top: 13px;
    right: 6px;
    pointer-events: none;
`;

const Segment = styled.div`
    display: flex;
    height: 31px;
    border: 1px solid #9bb6da;
    border-radius: 3px;
    background: linear-gradient(#d5e2f1 0, #c9daee 50%, #d5e4f5 100%);
`;

const SegButton = styled.button`
    display: flex;
    align-items: center;
    justify-content: center;
    gap: 5px;
    width: ${(props) => props.$width}px;
    color: #10141c;

    & + & {
        border-left: 1px solid #bacde6;
    }

    ${(props) => props.$active && css`
        background: linear-gradient(#fbd0a2 0, #f7ab52 40%, #fddc7c 100%);
    `}
`;

const Glyph = styled.span`
    padding-bottom: ${(props) => (props.$lifted ? 10 : 0)}px;
    font-family: ${(props) => (props.$sans ? '"Open Sans", sans-serif' : '"Liberation Serif", serif')};
    font-size: ${(props) => props.$size}px;
    font-weight: ${(props) => (props.$sans ? 600 : 700)};
    font-style: ${(props) => (props.$italic ? 'italic' : 'normal')};
    text-decoration: ${(props) => (props.$underline ? 'underline' : 'none')};
    line-height: 24px;
`;

const Spaced = styled.span`
    padding-left: 6px;
`;

const Raised = styled.span`
    align-self: flex-start;
    padding-top: 5px;
    margin-left: -7px;

    svg {
        width: 8px;
        height: 5px;
    }
`;

const ColorLetter = styled.span`
    display: flex;
    flex-direction: column;
    align-items: center;
    width: 24px;
    color: #3f5ea8;
    font-family: "Liberation Serif", serif;
    font-size: 22px;
    font-weight: 700;
    line-height: 19px;
`;

const ColorBar = styled.span`
    width: 24px;
    height: 5px;
    background: #ff0000;
`;

const FormulaBar = styled.div`
    display: flex;
    height: 40px;
    margin-top: 1px;
    padding-bottom: 5px;
    border-top: 3px solid #a3bede;
    border-bottom: 1px solid #7f9cc2;
    background: #d9e8fa;
`;

const NameBox = styled.input`
    width: 204px;
    border-bottom: 1px solid #7f9cc2;
    background: #fff;
    color: #16181d;
    font-size: 18px;
    text-align: center;
`;

const NameArrow = styled.button`
    display: flex;
    align-items: center;
    justify-content: center;
    width: 29px;
    border-bottom: 1px solid #7f9cc2;
    background: #fff;
`;

const FxButton = styled.button`
    display: flex;
    align-items: center;
    justify-content: space-between;
    width: 124px;
    padding: 0 9px 0 7px;
    border: 1px solid #8ba7cc;
    border-width: 0 1px 1px 1px;
    border-radius: 15px 0 0 15px;
    background: linear-gradient(#e4edf8 0, #c3d6ee 50%, #a9c4e8 100%);
`;

const Knob = styled.span`
    width: 13px;
    height: 13px;
    border-radius: 50%;
    background: linear-gradient(135deg, #a3b2c8, #e8eff9);
`;

const FxText = styled.span`
    color: #3c4454;
    font-family: "Liberation Serif", serif;
    font-size: 22px;
    font-style: italic;
    font-weight: 700;
    line-height: 24px;

    sub {
        font-size: 16px;
        line-height: 0;
        vertical-align: -2px;
    }
`;

const FormulaInput = styled.input`
    flex: 1;
    border-bottom: 1px solid #7f9cc2;
    background: #fff;
`;

const ExpandButton = styled.button`
    display: flex;
    align-items: center;
    justify-content: center;
    width: 22px;
    border: 1px solid #7f9cc2;
    background: linear-gradient(#e0ebf9, #b3cdef);
`;

const SheetArea = styled.section`
    display: flex;
    flex: 1;
    min-height: 0;
    background: #fff;
`;

const GridPane = styled.div`
    flex: 1;
    min-width: 0;
    overflow: hidden;
`;

const Table = styled.table`
    width: 100%;
    table-layout: fixed;
    border-collapse: separate;
    border-spacing: 0;
    font-family: "Liberation Sans", Arial, sans-serif;
    font-size: 19px;
    line-height: 22px;
    color: #16161c;
`;

const Col = styled.col`
    width: ${(props) => props.$width}px;
`;

const headCell = css`
    padding: 0;
    border-right: 1px solid #9eb6ce;
    border-bottom: 1px solid #9eb6ce;
    color: #3d4f5e;
    font-weight: 400;
    text-align: center;
`;

const ColumnHead = styled.th`
    ${headCell}
    height: 25px;
    background: linear-gradient(#f6f9fb 0, #e4e9f0 60%, #d5dde8 100%);
`;

const Corner = styled.th`
    ${headCell}
    height: 25px;
    padding: 2px 5px 0 0;
    background: #a9c4e9;

    svg {
        margin-left: auto;
    }
`;

// rows are slightly under 25px each, so every eighth one gives up a pixel
const Row = styled.tr`
    height: 25px;

    &:nth-child(8n) {
        height: 24px;
    }
`;

const RowHead = styled.th`
    ${headCell}
    background: #e4ecf7;
    font-size: 18px;
`;

const Cell = styled.td`
    padding: 0 ${(props) => (props.$negative ? 3 : 10)}px 0 0;
    border-right: 1px solid #d3d6e4;
    border-bottom: 1px solid ${(props) => (props.$ruled ? '#000' : '#d3d6e4')};
    box-shadow: ${(props) => (props.$ruled ? 'inset 0 -1px 0 #8a8a8e' : 'none')};
    font-weight: ${(props) => (props.$bold ? 700 : 400)};
    text-align: right;
    white-space: nowrap;

    ${(props) => props.$label && css`
        padding: 0 0 0 3px;
        text-align: left;
        font-size: ${props.$small ? 15 : 19}px;
    `}

    ${(props) => props.$center && css`
        padding: 0;
        text-align: center;
    `}

    ${(props) => props.$flagged && css`
        background: linear-gradient(135deg, #0b7a16 50%, transparent 50%) 0 0 / 8px 8px no-repeat;
    `}
`;

const Accounting = styled.span`
    display: flex;
    justify-content: space-between;
    padding-left: 9px;
`;

const ScrollBar = styled.div`
    display: flex;
    flex-direction: column;
    width: 22px;
    border-left: 2px solid #6d8cba;
    background: #7f9fd0;
`;

const SplitBox = styled.div`
    height: 11px;
    margin-top: 1px;
    border: 1px solid #6d8cba;
    background: linear-gradient(#fff 4px, #7f9fd0 4px, #7f9fd0 5px, #fff 5px);
`;

const ScrollUp = styled.button`
    display: flex;
    align-items: center;
    justify-content: center;
    height: 26px;
`;

const Thumb = styled.div`
    display: flex;
    align-items: center;
    justify-content: center;
    flex: 1;
    padding-top: 16px;
    border: 1px solid #50699a;
    border-bottom: none;
    border-radius: 2px 2px 0 0;
    background: linear-gradient(90deg, #f2f5f8 0, #e4e8ec 35%, #b9c8e4 50%, #c9d6ec 100%);
`;

const Grip = styled.span`
    width: 12px;
    height: 12px;
    background: repeating-linear-gradient(#8792a8 0, #8792a8 1px, #eef2f8 1px, #eef2f8 3px);
`;
